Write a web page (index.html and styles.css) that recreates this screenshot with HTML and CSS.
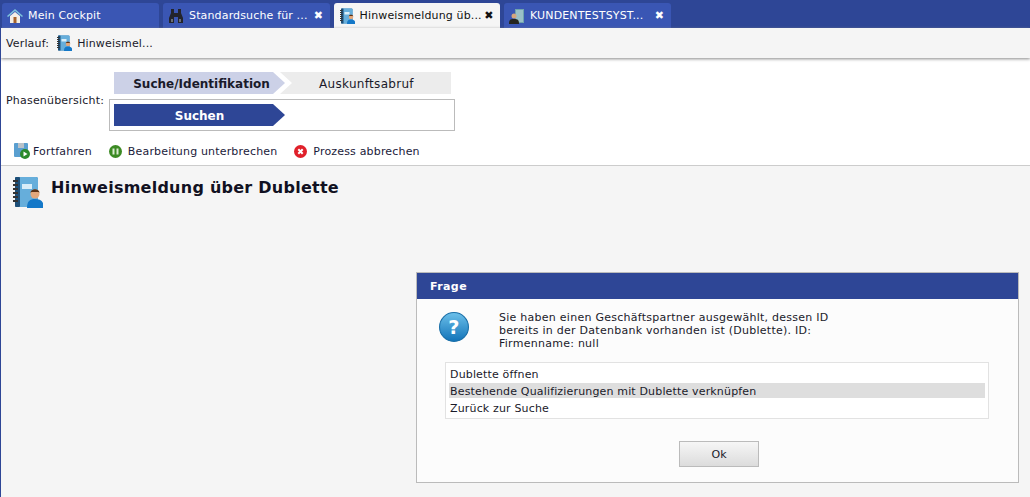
FILE: index.html
```html
<!DOCTYPE html>
<html lang="de">
<head>
    <meta charset="UTF-8">
    <meta name="viewport" content="width=device-width, initial-scale=1.0">
    <title>Hinweismeldung</title>
    <link rel="stylesheet" href="styles.css">
</head>
<body>
    <svg class="defs" width="0" height="0">
        <symbol id="book" viewBox="0 0 32 32">
            <rect x="4" y="1" width="23" height="30" rx="2" fill="#2f7fb8"/>
            <rect x="6" y="1" width="21" height="30" rx="2" fill="#66aedb"/>
            <rect x="4" y="1" width="5" height="30" rx="1" fill="#1d4f78"/>
            <path d="M2 5h5M2 9h5M2 13h5M2 17h5M2 21h5M2 25h5" stroke="#333" stroke-width="2"/>
            <rect x="11" y="8" width="10" height="5" fill="#d9edf8"/>
            <circle cx="24" cy="18" r="4.5" fill="#e2a77c"/>
            <path d="M19.5 17c0-5 9-5 9 0l-1-1h-7z" fill="#5b3216"/>
            <path d="M16 32c0-7 3-9 8-9s9 2 9 9z" fill="#1478c8"/>
        </symbol>
    </svg>

    <div class="tabs">
        <div class="tab">
            <svg class="tab-icon" viewBox="0 0 16 16">
                <path d="M8 1L0 8l1 1 7-6 7 6 1-1z" fill="#7cc4dc"/>
                <path d="M3 8l5-4 5 4v7H3z" fill="#f3efe6"/>
                <rect x="6.5" y="9" width="3" height="6" fill="#a5622b"/>
            </svg>
            <span class="tab-text">Mein Cockpit</span>
        </div>
        <div class="tab">
            <svg class="tab-icon" viewBox="0 0 16 16">
                <path d="M3 1h3v4h4V1h3v4l2 5v5H10V9H6v6H1v-5l2-5z" fill="#23242b"/>
                <path d="M3 11h2v3H3zM11 11h2v3h-2z" fill="#6b7078"/>
            </svg>
            <span class="tab-text">Standardsuche für ...</span>
            <span class="close">✖</span>
        </div>
        <div class="tab active">
            <svg class="tab-icon"><use href="#book"/></svg>
            <span class="tab-text">Hinweismeldung üb...</span>
            <span class="close">✖</span>
        </div>
        <div class="tab">
            <svg class="tab-icon" viewBox="0 0 16 16">
                <rect x="6" y="1" width="9" height="14" fill="#6fa3ad"/>
                <path d="M7 3h7M7 5h7M7 7h7M7 9h7M7 11h7M7 13h7" stroke="#c7dde0"/>
                <circle cx="5" cy="8" r="2.5" fill="#d5a67e"/>
                <path d="M0 16c0-4 1-5 5-5s5 1 5 5z" fill="#25251f"/>
            </svg>
            <span class="tab-text">KUNDENTESTSYST...</span>
            <span class="close">✖</span>
        </div>
    </div>

    <div class="history">
        <span>Verlauf:</span>
        <svg class="small-icon"><use href="#book"/></svg>
        <span>Hinweismel...</span>
    </div>

    <div class="process">
        <div class="phases">
            <span class="phase-label">Phasenübersicht:</span>
            <div class="phase-steps">
                <div class="phase-row">
                    <div class="chevron current">Suche/Identifikation</div>
                    <div class="chevron next">Auskunftsabruf</div>
                </div>
                <div class="phase-box">
                    <div class="chevron sub">Suchen</div>
                </div>
            </div>
        </div>
        <div class="actions">
            <div class="action">
                <svg class="action-icon" viewBox="0 0 16 16">
                    <rect x="0" y="0" width="14" height="14" rx="1" fill="#5a9fd0"/>
                    <rect x="4" y="0" width="6" height="5" fill="#b9c2c9"/>
                    <circle cx="11" cy="11" r="5" fill="#2c8a2c"/>
                    <path d="M9.5 8.5l4 2.5-4 2.5z" fill="#fff"/>
                </svg>
                Fortfahren
            </div>
            <div class="action">
                <svg class="action-icon round" viewBox="0 0 13 13">
                    <circle cx="6.5" cy="6.5" r="6.5" fill="#3c8a24"/>
                    <path d="M4.5 3.5v6M8.5 3.5v6" stroke="#dcebd2" stroke-width="2"/>
                </svg>
                Bearbeitung unterbrechen
            </div>
            <div class="action">
                <svg class="action-icon round" viewBox="0 0 13 13">
                    <circle cx="6.5" cy="6.5" r="6.5" fill="#e0202a"/>
                    <path d="M4.3 4.3l4.4 4.4M8.7 4.3l-4.4 4.4" stroke="#fff" stroke-width="2"/>
                </svg>
                Prozess abbrechen
            </div>
        </div>
    </div>

    <div class="content">
        <svg class="title-icon"><use href="#book"/></svg>
        <h1>Hinweismeldung über Dublette</h1>
    </div>

    <div class="dialog">
        <div class="dialog-title">Frage</div>
        <div class="dialog-body">
            <div class="message">
                <svg class="question" viewBox="0 0 28 28">
                    <defs>
                        <linearGradient id="blue" x1="0" y1="0" x2="0" y2="1">
                            <stop offset="0" stop-color="#6cc0ea"/>
                            <stop offset="1" stop-color="#1273b8"/>
                        </linearGradient>
                    </defs>
                    <circle cx="14" cy="14" r="13.5" fill="url(#blue)" stroke="#1a6fa8" stroke-width="1"/>
                    <text x="14" y="20.5" text-anchor="middle" class="question-mark">?</text>
                </svg>
                <p>Sie haben einen Geschäftspartner ausgewählt, dessen ID<br>bereits in der Datenbank vorhanden ist (Dublette). ID:<br>Firmenname: null</p>
            </div>
            <div class="choices">
                <div class="choice">Dublette öffnen</div>
                <div class="choice selected">Bestehende Qualifizierungen mit Dublette verknüpfen</div>
                <div class="choice">Zurück zur Suche</div>
            </div>
            <div class="buttons">
                <button class="ok">Ok</button>
            </div>
        </div>
    </div>
</body>
</html>
```

FILE: styles.css
```css
*{
    margin: 0;
    padding: 0;
    box-sizing: border-box;
}
html,body{
    height: 100%;
    overflow: hidden;
}
body{
    background: #f5f5f5;
    border-left: 1px solid #2e4696;
    font-family: 'DejaVu Sans',Verdana,sans-serif;
    font-size: 11px;
    letter-spacing: 0.15px;
    color: #1a1a2a;
    position: relative;
}
.defs{
    position: absolute;
}
.tabs{
    height: 28px;
    margin-left: -1px;
    padding: 3px 0 0 2px;
    background: #2e4696;
    display: flex;
    gap: 4px;
}
.tab{
    width: 166.5px;
    height: 25px;
    background: #3a56b4;
    color: #fff;
    border-radius: 3px 3px 0 0;
    display: flex;
    align-items: center;
    padding: 0 5px;
}
.tab:first-child{
    width: 157px;
}
.tab.active{
    background: #f5f5f5;
    color: #111;
}
.tab-icon{
    width: 16px;
    height: 16px;
    margin-right: 5px;
    flex: none;
}
.tab-text{
    flex: 1;
    white-space: nowrap;
}
.close{
    font-size: 11px;
    width: 12px;
    text-align: center;
}
.history{
    height: 30px;
    display: flex;
    align-items: center;
    padding-left: 5px;
    background: #f5f5f5;
    box-shadow: 0 1px 3px #888;
    position: relative;
}
.small-icon{
    width: 16px;
    height: 16px;
    margin: 0 5px 0 7px;
}
.process{
    height: 108px;
    background: #fff;
    border-bottom: 1px solid #ccc;
}
.phases{
    display: flex;
    align-items: flex-start;
    padding-top: 14px;
}
.phase-label{
    margin: 22px 0 0 5px;
    width: 103px;
    letter-spacing: 0.2px;
}
.phase-steps{
    width: 346px;
    position: relative;
}
.phase-row{
    display: flex;
    padding-left: 5px;
    position: relative;
    z-index: 1;
}
.chevron{
    width: 171px;
    height: 22px;
    line-height: 24px;
    text-align: center;
    font-size: 12px;
    clip-path: polygon(0 0,calc(100% - 12px) 0,100% 50%,calc(100% - 12px) 100%,0 100%);
}
.current{
    background: #ccd1e7;
    font-weight: bold;
    letter-spacing: 0;
    padding-left: 4px;
}
.next{
    margin-left: -5px;
    background: #ececec;
    clip-path: polygon(0 0,100% 0,100% 100%,0 100%,12px 50%);
    letter-spacing: 0.3px;
    padding-left: 2px;
}
.phase-box{
    height: 32px;
    margin-top: 5px;
    border: 1px solid #bbb;
    padding: 4px;
    background: #fff;
}
.sub{
    background: #2e4696;
    color: #fff;
    font-weight: bold;
    letter-spacing: 0;
}
.actions{
    display: flex;
    margin-top: 12px;
    padding-left: 13px;
    color: #1a1a3a;
    letter-spacing: 0.17px;
}
.action{
    display: flex;
    align-items: center;
    margin-right: 17px;
    height: 16px;
}
.action-icon{
    width: 16px;
    height: 16px;
    margin-right: 3px;
}
.action-icon.round{
    width: 13px;
    height: 13px;
    margin-right: 6px;
}
.content{
    display: flex;
    align-items: flex-start;
    padding: 10px 0 0 10px;
}
.title-icon{
    width: 32px;
    height: 32px;
    margin-right: 8px;
}
h1{
    font-size: 16px;
    line-height: 24px;
    letter-spacing: 0.25px;
    color: #111122;
}
.dialog{
    position: absolute;
    left: 415px;
    top: 272px;
    width: 603px;
    height: 211px;
    border: 1px solid #bbb;
    background: #fcfcfc;
}
.dialog-title{
    height: 26px;
    line-height: 27px;
    padding-left: 13px;
    background: #2e4696;
    color: #fff;
    font-weight: bold;
    letter-spacing: 0.4px;
}
.dialog-body{
    padding: 13px 28px 0 28px;
}
.message{
    display: flex;
    height: 50px;
}
.question{
    width: 30px;
    height: 30px;
    margin: 0 0 0 -6px;
    flex: none;
}
.question-mark{
    font-size: 18px;
    font-weight: bold;
    fill: #fff;
}
.message p{
    line-height: 13px;
    margin: -1px 0 0 30px;
    letter-spacing: 0.26px;
    white-space: nowrap;
}
.choices{
    width: 544px;
    height: 57px;
    border: 1px solid #e2e2e2;
    background: #fff;
    padding: 3px 3px 0 3px;
}
.choice{
    height: 15px;
    line-height: 17px;
    padding-left: 1px;
    margin-bottom: 2px;
    letter-spacing: 0.16px;
}
.selected{
    background: #dedede;
}
.buttons{
    display: flex;
    justify-content: center;
    margin-top: 22px;
    width: 548px;
}
.ok{
    width: 80px;
    height: 26px;
    border: 1px solid #bbb;
    background: linear-gradient(#f6f6f6,#dcdcdc);
    font-family: 'DejaVu Sans',sans-serif;
    font-size: 11px;
    color: #1a1a2a;
}
```
